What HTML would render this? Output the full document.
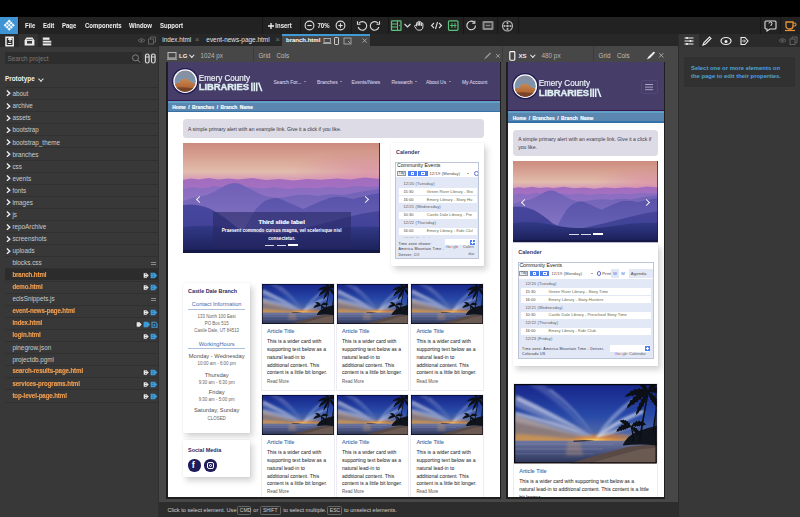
<!DOCTYPE html>
<html><head><meta charset="utf-8">
<style>
*{box-sizing:border-box;margin:0;padding:0}
html,body{width:800px;height:517px;overflow:hidden;background:#000;font-family:"Liberation Sans",sans-serif}
.a{position:absolute}
.t{position:absolute;white-space:nowrap;line-height:1}
#menubar{left:0;top:17px;width:800px;height:17px;background:#222}
.mi{font-size:6px;font-weight:bold;color:#f2f2f2;top:22.2px;transform:scaleY(1.15);transform-origin:0 0}
.sep{position:absolute;top:17px;width:1px;height:17px;background:#171717}
#lside{left:0;top:34px;width:159px;height:483px;background:#383838}
#ltabs{left:0;top:34px;width:159px;height:12.5px;background:#2a2a2a}
#doctabs{left:159px;top:34px;width:520px;height:12px;background:#272727}
#canvas{left:159px;top:46px;width:520px;height:456px;background:#474747}
#status{left:159px;top:501.6px;width:520px;height:15.4px;background:#2d2d2d}
#rside{left:679px;top:34px;width:121px;height:483px;background:#383838}
.rl{position:absolute;left:5px;width:153px;height:1px;background:#303030}
.rt{left:12.4px;font-size:6.35px;color:#cacaca}
.rt.o{color:#ec9c50;font-weight:bold;font-size:6.15px;letter-spacing:-.1px;transform:scaleY(1.12);transform-origin:0 60%;-webkit-text-stroke:.15px #ec9c50}
.chev{position:absolute;left:5px;width:4.2px;height:4.2px;border-right:1.3px solid #f0f0f0;border-top:1.3px solid #f0f0f0;transform:rotate(45deg)}
.ico{position:absolute}

.logo{position:absolute;width:26.4px;height:26.4px;border-radius:50%;background:#1d1a50}
.logo::before{content:"";position:absolute;left:1.4px;top:1.4px;width:23.6px;height:23.6px;border-radius:50%;background:#fff}
.logo::after{content:"";position:absolute;left:2.7px;top:2.7px;width:21px;height:21px;border-radius:50%;background:radial-gradient(ellipse 55% 35% at 45% 62%,#c07840 0,#b86e3a 60%,transparent 62%),linear-gradient(#8a8e9a 0,#7a90a8 35%,#8898a8 50%,#a06a48 72%,#8a4a2a 100%)}
.nav{top:18.6px;font-size:4.9px;color:#ccc8e0;-webkit-text-stroke:.1px #ccc8e0}
.lgnav{top:17.4px}
.car{display:inline-block;margin-left:2.4px;vertical-align:middle;border-left:1.5px solid transparent;border-right:1.5px solid transparent;border-top:1.8px solid #d4d0e6;position:relative;top:-.6px}
.chv{width:5px;height:5px;border-right:.8px solid #eee;border-top:.8px solid #eee}
.card{background:#fff;box-shadow:2.5px 3.5px 6px rgba(0,0,0,.17),0 0 1px rgba(0,0,0,.12)}
.gcal{position:absolute;border:.6px solid #bcc4d8;background:#fff;overflow:hidden}
.gd{font-size:4px;color:#555;letter-spacing:.15px}
.gdt{font-size:4px;color:#444;letter-spacing:.2px}
.gbtn{position:absolute;top:8.2px;height:5px}
.gft{font-size:3.6px;color:#333;line-height:5.2px;white-space:normal;letter-spacing:.25px}
.gr{position:absolute;height:6.9px;background:#fff}
.gt{font-size:4px;color:#444}
.ge{font-size:4.15px;color:#6a6a48}
.sc{left:15.2px;width:67.4px;text-align:center}
.sc.h{font-size:5.7px;color:#3d6bb0}
.sc.s{font-size:4.45px;color:#666}
.sc.d{font-size:5.75px;color:#505050}
.soc{width:12.4px;height:12.4px;border-radius:50%;background:#201c5a}
.acard{background:#fff;border:.5px solid #ececf2}
.at{font-size:5.6px;color:#4470ae;-webkit-text-stroke:.1px #4470ae}
.ab{font-size:5.1px;color:#333;line-height:7.75px;-webkit-text-stroke:.04px #333}
.rm{font-size:4.45px;color:#555}
.kb{top:506px;height:8.6px;border:.8px solid #666;border-radius:1.5px}
</style></head><body>
<div class="a" id="menubar"></div>
<div class="a" style="left:0;top:17px;width:17.6px;height:17px;background:#3f95d3"></div>
<svg class="ico" style="left:2.6px;top:19.4px" width="12.4" height="12.4" viewBox="0 0 12 12"><path d="M6 .6L11.4 6 6 11.4.6 6z" fill="#f4f8fb"/><path d="M4.2 2.4L9.6 7.8M2.4 4.2L7.8 9.6M7.8 2.4L2.4 7.8M9.6 4.2L4.2 9.6" stroke="#3f95d3" stroke-width=".75"/></svg>
<div class="a" style="left:17.6px;top:17px;width:1.2px;height:17px;background:#1a0e0e"></div>
<div class="t mi" style="left:25px">File</div>
<div class="t mi" style="left:43px">Edit</div>
<div class="t mi" style="left:62px">Page</div>
<div class="t mi" style="left:85px">Components</div>
<div class="t mi" style="left:129px">Window</div>
<div class="t mi" style="left:160px">Support</div>

<div class="sep" style="left:262px"></div>
<svg class="ico" style="left:268.3px;top:22.6px" width="6" height="6" viewBox="0 0 6 6"><path d="M3 0v6M0 3h6" stroke="#f2f2f2" stroke-width="1.3"/></svg><div class="t mi" style="left:275.3px">Insert</div>
<div class="sep" style="left:300px"></div>
<svg class="ico" style="left:304px;top:20px" width="44" height="11" viewBox="0 0 44 11"><circle cx="5.5" cy="5.5" r="4.4" fill="none" stroke="#ddd" stroke-width="1.1"/><path d="M3.3 5.5h4.4" stroke="#ddd" stroke-width="1.1"/><circle cx="36.5" cy="5.5" r="4.4" fill="none" stroke="#ddd" stroke-width="1.1"/><path d="M34.3 5.5h4.4M36.5 3.3v4.4" stroke="#ddd" stroke-width="1.1"/></svg>
<div class="t mi" style="left:317.5px">70%</div>
<div class="sep" style="left:351px"></div>
<svg class="ico" style="left:356px;top:20px" width="26" height="11" viewBox="0 0 26 11"><path d="M3 3.2A4.3 4.3 0 1 1 2.2 7" fill="none" stroke="#ddd" stroke-width="1.1"/><path d="M1.5 1.2v3h3" fill="none" stroke="#ddd" stroke-width="1.1"/><path d="M22 3.2A4.3 4.3 0 1 0 22.8 7" fill="none" stroke="#ddd" stroke-width="1.1"/><path d="M23.5 1.2v3h-3" fill="none" stroke="#ddd" stroke-width="1.1"/></svg>
<div class="sep" style="left:388px"></div>
<svg class="ico" style="left:390px;top:20px" width="72" height="11" viewBox="0 0 72 11"><rect x="1.5" y=".8" width="9.5" height="9.5" rx=".6" fill="none" stroke="#5cc27c" stroke-width="1.3"/><path d="M1.5 4h5.5M1.5 7h5.5M7.5 .8v9.5" stroke="#5cc27c" stroke-width="1"/><path d="M9 5.5h1" stroke="#5cc27c" stroke-width="1"/><path d="M14.5 4l3 3 3-3" fill="none" stroke="#ddd" stroke-width="1.1"/><path d="M26.5 6V3.2a.8.8 0 0 1 1.6 0V5.5M28.1 5.5V2a.8.8 0 0 1 1.6 0v3.5M29.7 5.5V2.6a.8.8 0 0 1 1.6 0V5.8M31.3 5.8V3.8a.8.8 0 0 1 1.6 0V7c0 2-1.4 3.2-3.2 3.2h-1c-1.2 0-2-.6-2.6-1.6L24.6 6.4a.8.8 0 0 1 1.3-.9L26.5 6.4" fill="none" stroke="#ddd" stroke-width="1"/><path d="M44 3l-2.5 2.5L44 8M49 3l2.5 2.5L49 8M47.5 2l-2 7" fill="none" stroke="#ddd" stroke-width="1.1"/><rect x="58.5" y=".8" width="9.5" height="9.5" rx="1" fill="none" stroke="#5cc27c" stroke-width="1.2"/><path d="M62 3v5M65 3v5M60 5.5h6.5" stroke="#5cc27c" stroke-width=".9"/></svg>
<div class="sep" style="left:463px"></div>
<svg class="ico" style="left:466px;top:20px" width="30" height="11" viewBox="0 0 30 11"><path d="M9.5 5.5A4.3 4.3 0 1 1 8.2 2.4" fill="none" stroke="#ddd" stroke-width="1.1"/><path d="M8.8 .8v2.5H6.3" fill="none" stroke="#ddd" stroke-width="1.1"/><rect x="16.5" y="1" width="11" height="9" rx="1" fill="#8a8a8a"/><rect x="18.5" y="3" width="7" height="5" fill="#3a3a3a"/><path d="M20 5.5h4" stroke="#8a8a8a" stroke-width="1"/></svg>
<div class="sep" style="left:497px"></div>
<svg class="ico" style="left:501px;top:19.5px" width="13" height="12" viewBox="0 0 13 12"><circle cx="6.5" cy="6" r="5" fill="none" stroke="#bbb" stroke-width="1.1"/><circle cx="6.5" cy="6" r="1.3" fill="#bbb"/><circle cx="6.5" cy="3" r="1.1" fill="#bbb"/><circle cx="6.5" cy="9" r="1.1" fill="#bbb"/><circle cx="3.5" cy="6" r="1.1" fill="#bbb"/><circle cx="9.5" cy="6" r="1.1" fill="#bbb"/></svg>
<div class="sep" style="left:518px"></div>
<div class="sep" style="left:760px"></div>
<svg class="ico" style="left:764px;top:20px" width="13" height="12" viewBox="0 0 13 12"><path d="M2 1h9a1 1 0 0 1 1 1v6a1 1 0 0 1-1 1H6l-3 2V9H2a1 1 0 0 1-1-1V2a1 1 0 0 1 1-1z" fill="none" stroke="#ddd" stroke-width="1.1"/><path d="M5 3.5a1.5 1.5 0 1 1 2 1.4V6" fill="none" stroke="#ddd" stroke-width="1"/></svg>
<div class="sep" style="left:780px"></div>
<svg class="ico" style="left:784px;top:20px" width="13" height="12" viewBox="0 0 13 12"><path d="M2 2h7v4a3 3 0 0 1-3 3H5a3 3 0 0 1-3-3z" fill="none" stroke="#e69338" stroke-width="1.3"/><path d="M9 3h1.5a1.5 1.5 0 0 1 0 3H9" fill="none" stroke="#e69338" stroke-width="1.1"/><path d="M1 10.5h10" stroke="#e69338" stroke-width="1.2"/></svg>

<div class="a" id="lside"></div>
<div class="a" id="ltabs"></div>
<div class="a" style="left:19px;top:34px;width:18.5px;height:12.5px;background:#333"></div>
<svg class="ico" style="left:4px;top:35.5px" width="52" height="11" viewBox="0 0 52 11"><path d="M2 1.2h7.2v8.6H2z" fill="none" stroke="#ececec" stroke-width="1.5"/><path d="M4 3.5l2-1.6 2 1.6M6 2v4" fill="none" stroke="#ececec" stroke-width="1.1"/><path d="M3.8 7.5h3.6" stroke="#ececec" stroke-width="1"/><path d="M20.6 4.6 L22.4 1.4 H28.6 L30.4 4.6 V9.4 H20.6z" fill="#ececec"/><rect x="23" y="5" width="5" height="2.6" fill="#3a3a3a"/><path d="M22.5 3.6h6" stroke="#3a3a3a" stroke-width=".7"/><path d="M38.6 1.2h7.2v3H38.6z M38.6 4.4h8.8v2.5H38.6z M38.6 7.1h8.8v2.6H38.6z" fill="#ececec" stroke="#2a2a2a" stroke-width=".5"/></svg>
<svg class="ico" style="left:137px;top:36px" width="21" height="9" viewBox="0 0 21 9"><path d="M1 4.5Q4.5 1 8 4.5 4.5 8 1 4.5z" fill="none" stroke="#666" stroke-width=".9"/><circle cx="4.5" cy="4.5" r="1.1" fill="#666"/><rect x="11.5" y="3" width="5" height="5" fill="none" stroke="#666" stroke-width=".9"/><path d="M13.5 3V1h5v5h-2" fill="none" stroke="#666" stroke-width=".9"/></svg>

<div class="a" style="left:5px;top:51.5px;width:137px;height:12px;background:#2d2d2d;border-radius:1px"></div>
<div class="t" style="left:7.5px;top:55.6px;font-size:6.35px;color:#7a7a7a">Search project</div>
<svg class="ico" style="left:131px;top:52.5px" width="27" height="11" viewBox="0 0 27 11"><circle cx="4.5" cy="4.8" r="3" fill="none" stroke="#8a8a8a" stroke-width=".9"/><path d="M6.6 7l2.6 2.6" stroke="#8a8a8a" stroke-width="1"/><rect x="14.5" y="1" width="3.6" height="9" rx="1.8" fill="none" stroke="#d8d8d8" stroke-width="1.2"/><rect x="20.5" y="1" width="3.6" height="9" rx="1.8" fill="none" stroke="#d8d8d8" stroke-width="1.2"/><path d="M14.5 4h3.6M20.5 4h3.6" stroke="#d8d8d8" stroke-width="1"/></svg>
<div class="t" style="left:4.9px;top:76.3px;font-size:6.4px;font-weight:bold;color:#f0f0f0">Prototype</div>
<div class="a" style="left:39px;top:76.6px;width:3.8px;height:3.8px;border-right:1.2px solid #eee;border-bottom:1.2px solid #eee;transform:rotate(45deg)"></div>
<div class="rl" style="top:86.8px"></div>
<svg class="a" style="left:6px;top:90.4px" width="5" height="6.4" viewBox="0 0 5 6.4"><path d="M.9 .6L3.8 3.2.9 5.8" fill="none" stroke="#f2f2f2" stroke-width="1.3"/></svg><div class="t rt" style="top:91.1px">about</div><div class="rl" style="top:99.0px"></div>
<svg class="a" style="left:6px;top:102.5px" width="5" height="6.4" viewBox="0 0 5 6.4"><path d="M.9 .6L3.8 3.2.9 5.8" fill="none" stroke="#f2f2f2" stroke-width="1.3"/></svg><div class="t rt" style="top:103.2px">archive</div><div class="rl" style="top:111.1px"></div>
<svg class="a" style="left:6px;top:114.6px" width="5" height="6.4" viewBox="0 0 5 6.4"><path d="M.9 .6L3.8 3.2.9 5.8" fill="none" stroke="#f2f2f2" stroke-width="1.3"/></svg><div class="t rt" style="top:115.3px">assets</div><div class="rl" style="top:123.2px"></div>
<svg class="a" style="left:6px;top:126.7px" width="5" height="6.4" viewBox="0 0 5 6.4"><path d="M.9 .6L3.8 3.2.9 5.8" fill="none" stroke="#f2f2f2" stroke-width="1.3"/></svg><div class="t rt" style="top:127.4px">bootstrap</div><div class="rl" style="top:135.3px"></div>
<svg class="a" style="left:6px;top:138.8px" width="5" height="6.4" viewBox="0 0 5 6.4"><path d="M.9 .6L3.8 3.2.9 5.8" fill="none" stroke="#f2f2f2" stroke-width="1.3"/></svg><div class="t rt" style="top:139.5px">bootstrap_theme</div><div class="rl" style="top:147.4px"></div>
<svg class="a" style="left:6px;top:150.9px" width="5" height="6.4" viewBox="0 0 5 6.4"><path d="M.9 .6L3.8 3.2.9 5.8" fill="none" stroke="#f2f2f2" stroke-width="1.3"/></svg><div class="t rt" style="top:151.6px">branches</div><div class="rl" style="top:159.5px"></div>
<svg class="a" style="left:6px;top:163.0px" width="5" height="6.4" viewBox="0 0 5 6.4"><path d="M.9 .6L3.8 3.2.9 5.8" fill="none" stroke="#f2f2f2" stroke-width="1.3"/></svg><div class="t rt" style="top:163.7px">css</div><div class="rl" style="top:171.6px"></div>
<svg class="a" style="left:6px;top:175.1px" width="5" height="6.4" viewBox="0 0 5 6.4"><path d="M.9 .6L3.8 3.2.9 5.8" fill="none" stroke="#f2f2f2" stroke-width="1.3"/></svg><div class="t rt" style="top:175.8px">events</div><div class="rl" style="top:183.7px"></div>
<svg class="a" style="left:6px;top:187.2px" width="5" height="6.4" viewBox="0 0 5 6.4"><path d="M.9 .6L3.8 3.2.9 5.8" fill="none" stroke="#f2f2f2" stroke-width="1.3"/></svg><div class="t rt" style="top:187.9px">fonts</div><div class="rl" style="top:195.8px"></div>
<svg class="a" style="left:6px;top:199.3px" width="5" height="6.4" viewBox="0 0 5 6.4"><path d="M.9 .6L3.8 3.2.9 5.8" fill="none" stroke="#f2f2f2" stroke-width="1.3"/></svg><div class="t rt" style="top:200.0px">images</div><div class="rl" style="top:207.9px"></div>
<svg class="a" style="left:6px;top:211.4px" width="5" height="6.4" viewBox="0 0 5 6.4"><path d="M.9 .6L3.8 3.2.9 5.8" fill="none" stroke="#f2f2f2" stroke-width="1.3"/></svg><div class="t rt" style="top:212.1px">js</div><div class="rl" style="top:220.0px"></div>
<svg class="a" style="left:6px;top:223.5px" width="5" height="6.4" viewBox="0 0 5 6.4"><path d="M.9 .6L3.8 3.2.9 5.8" fill="none" stroke="#f2f2f2" stroke-width="1.3"/></svg><div class="t rt" style="top:224.2px">repoArchive</div><div class="rl" style="top:232.1px"></div>
<svg class="a" style="left:6px;top:235.6px" width="5" height="6.4" viewBox="0 0 5 6.4"><path d="M.9 .6L3.8 3.2.9 5.8" fill="none" stroke="#f2f2f2" stroke-width="1.3"/></svg><div class="t rt" style="top:236.3px">screenshots</div><div class="rl" style="top:244.2px"></div>
<svg class="a" style="left:6px;top:247.7px" width="5" height="6.4" viewBox="0 0 5 6.4"><path d="M.9 .6L3.8 3.2.9 5.8" fill="none" stroke="#f2f2f2" stroke-width="1.3"/></svg><div class="t rt" style="top:248.4px">uploads</div><div class="rl" style="top:256.3px"></div>
<div class="t rt" style="top:259.9px">blocks.css</div><div class="rl" style="top:268.4px"></div>
<div class="a" style="left:151px;top:261.9px;width:5px;height:3.2px;border-top:1px solid #8a8a8a;border-bottom:1px solid #8a8a8a"></div>
<div class="a" style="left:5px;top:268.7px;width:153px;height:11.8px;background:#2c2c2c"></div>
<div class="t rt o" style="top:271.6px">branch.html</div><div class="rl" style="top:280.5px"></div>
<svg class="a" style="left:142px;top:272.3px" width="16" height="7" viewBox="0 0 16 7"><path d="M1.2 .8h3.6l2.2 2.7-2.2 2.7H1.2z" fill="#e8e8e8" stroke="#111" stroke-width=".7"/><path d="M3 2.3h1.5M3 4.5h1.5" stroke="#111" stroke-width=".5"/><path d="M8.6 .8h4.2l2.4 2.7-2.4 2.7H8.6z" fill="#3d9ad8"/><path d="M10 2.3h2M10 4.5h2" stroke="#2a5a80" stroke-width=".5"/></svg>
<div class="t rt o" style="top:283.7px">demo.html</div><div class="rl" style="top:292.6px"></div>
<svg class="a" style="left:142px;top:284.4px" width="16" height="7" viewBox="0 0 16 7"><path d="M1.2 .8h3.6l2.2 2.7-2.2 2.7H1.2z" fill="#e8e8e8" stroke="#111" stroke-width=".7"/><path d="M3 2.3h1.5M3 4.5h1.5" stroke="#111" stroke-width=".5"/><path d="M8.6 .8h4.2l2.4 2.7-2.4 2.7H8.6z" fill="#3d9ad8"/><path d="M10 2.3h2M10 4.5h2" stroke="#2a5a80" stroke-width=".5"/></svg>
<div class="t rt" style="top:296.2px">eclsSnippets.js</div><div class="rl" style="top:304.7px"></div>
<div class="a" style="left:151px;top:298.2px;width:5px;height:3.2px;border-top:1px solid #8a8a8a;border-bottom:1px solid #8a8a8a"></div>
<div class="t rt o" style="top:307.9px">event-news-page.html</div><div class="rl" style="top:316.8px"></div>
<svg class="a" style="left:142px;top:308.6px" width="16" height="7" viewBox="0 0 16 7"><path d="M1.2 .8h3.6l2.2 2.7-2.2 2.7H1.2z" fill="#e8e8e8" stroke="#111" stroke-width=".7"/><path d="M3 2.3h1.5M3 4.5h1.5" stroke="#111" stroke-width=".5"/><path d="M8.6 .8h4.2l2.4 2.7-2.4 2.7H8.6z" fill="#3d9ad8"/><path d="M10 2.3h2M10 4.5h2" stroke="#2a5a80" stroke-width=".5"/></svg>
<div class="t rt o" style="top:320.0px">index.html</div><div class="rl" style="top:328.9px"></div>
<svg class="a" style="left:135px;top:320.7px" width="23" height="7" viewBox="0 0 23 7"><path d="M1.2 .8h3.6l2.2 2.7-2.2 2.7H1.2z" fill="#e8e8e8" stroke="#111" stroke-width=".7"/><path d="M8.6 .8h4.2l2.4 2.7-2.4 2.7H8.6z" fill="#3d9ad8"/><path d="M17 1.2h3.5l1.5 1.5v3.5h-5z" fill="none" stroke="#3d9ad8" stroke-width="1.1"/><circle cx="19.3" cy="4" r="1" fill="#3d9ad8"/></svg>
<div class="t rt o" style="top:332.1px">login.html</div><div class="rl" style="top:341.0px"></div>
<svg class="a" style="left:142px;top:332.8px" width="16" height="7" viewBox="0 0 16 7"><path d="M1.2 .8h3.6l2.2 2.7-2.2 2.7H1.2z" fill="#e8e8e8" stroke="#111" stroke-width=".7"/><path d="M3 2.3h1.5M3 4.5h1.5" stroke="#111" stroke-width=".5"/><path d="M8.6 .8h4.2l2.4 2.7-2.4 2.7H8.6z" fill="#3d9ad8"/><path d="M10 2.3h2M10 4.5h2" stroke="#2a5a80" stroke-width=".5"/></svg>
<div class="t rt" style="top:344.6px">pinegrow.json</div><div class="rl" style="top:353.1px"></div>
<div class="t rt" style="top:356.7px">projectdb.pgml</div><div class="rl" style="top:365.2px"></div>
<div class="t rt o" style="top:368.4px">search-results-page.html</div><div class="rl" style="top:377.3px"></div>
<svg class="a" style="left:142px;top:369.1px" width="16" height="7" viewBox="0 0 16 7"><path d="M1.2 .8h3.6l2.2 2.7-2.2 2.7H1.2z" fill="#e8e8e8" stroke="#111" stroke-width=".7"/><path d="M3 2.3h1.5M3 4.5h1.5" stroke="#111" stroke-width=".5"/><path d="M8.6 .8h4.2l2.4 2.7-2.4 2.7H8.6z" fill="#3d9ad8"/><path d="M10 2.3h2M10 4.5h2" stroke="#2a5a80" stroke-width=".5"/></svg>
<div class="t rt o" style="top:380.5px">services-programs.html</div><div class="rl" style="top:389.4px"></div>
<svg class="a" style="left:142px;top:381.2px" width="16" height="7" viewBox="0 0 16 7"><path d="M1.2 .8h3.6l2.2 2.7-2.2 2.7H1.2z" fill="#e8e8e8" stroke="#111" stroke-width=".7"/><path d="M3 2.3h1.5M3 4.5h1.5" stroke="#111" stroke-width=".5"/><path d="M8.6 .8h4.2l2.4 2.7-2.4 2.7H8.6z" fill="#3d9ad8"/><path d="M10 2.3h2M10 4.5h2" stroke="#2a5a80" stroke-width=".5"/></svg>
<div class="t rt o" style="top:392.6px">top-level-page.html</div><div class="rl" style="top:401.5px"></div>
<svg class="a" style="left:142px;top:393.3px" width="16" height="7" viewBox="0 0 16 7"><path d="M1.2 .8h3.6l2.2 2.7-2.2 2.7H1.2z" fill="#e8e8e8" stroke="#111" stroke-width=".7"/><path d="M3 2.3h1.5M3 4.5h1.5" stroke="#111" stroke-width=".5"/><path d="M8.6 .8h4.2l2.4 2.7-2.4 2.7H8.6z" fill="#3d9ad8"/><path d="M10 2.3h2M10 4.5h2" stroke="#2a5a80" stroke-width=".5"/></svg>
<div class="a" style="left:158px;top:46px;width:1px;height:471px;background:#2f2f2f"></div><div class="a" style="left:161.2px;top:272.5px;width:.8px;height:16px;background:repeating-linear-gradient(#666 0 .8px,transparent .8px 2.4px)"></div>

<div class="a" id="doctabs"></div>
<div class="t" style="left:162.3px;top:37.2px;font-size:6.35px;color:#e2e2e2">index.html</div>
<div class="t" style="left:195px;top:36.3px;font-size:7.5px;color:#777">&#215;</div>

<div class="t" style="left:206.3px;top:37.2px;font-size:6.45px;color:#e2e2e2">event-news-page.html</div>
<div class="t" style="left:275.5px;top:36.3px;font-size:7.5px;color:#777">&#215;</div>
<div class="a" style="left:281.7px;top:34px;width:88px;height:12px;background:#474747"></div>
<div class="a" style="left:281.7px;top:34px;width:88px;height:2px;background:#3f9ad6"></div>
<div class="t" style="left:286px;top:36.8px;font-size:6px;font-weight:bold;color:#fff">branch.html</div>
<svg class="ico" style="left:323px;top:37px" width="46" height="8" viewBox="0 0 46 8"><rect x="1" y="1.5" width="6.5" height="4" fill="none" stroke="#bbb" stroke-width=".8"/><path d="M0 6.5h8.5" stroke="#bbb" stroke-width=".8"/><rect x="11.5" y=".5" width="4" height="7" rx=".7" fill="none" stroke="#ddd" stroke-width=".9"/><rect x="21" y="1" width="7" height="6" fill="none" stroke="#aaa" stroke-width=".9"/><path d="M25 4l2.5 2.5" stroke="#aaa" stroke-width=".9"/><path d="M39.5 1.5l4.2 4.2M43.7 1.5l-4.2 4.2" stroke="#bbb" stroke-width=".8"/></svg>

<div class="a" id="canvas"></div>
<svg width="0" height="0" style="position:absolute">
<defs>
<linearGradient id="lsky" x1="0" y1="0" x2="0" y2="1"><stop offset="0" stop-color="#8e8c96"/><stop offset=".45" stop-color="#7c94ae"/><stop offset="1" stop-color="#9aa8b8"/></linearGradient>
<linearGradient id="lrock" x1="0" y1="0" x2="0" y2="1"><stop offset="0" stop-color="#c88850"/><stop offset=".5" stop-color="#b46a38"/><stop offset="1" stop-color="#6a3a22"/></linearGradient>
<clipPath id="lclip"><circle cx="13.2" cy="13.2" r="10.6"/></clipPath>
<symbol id="logo" viewBox="0 0 26.4 26.4">
<circle cx="13.2" cy="13.2" r="13.2" fill="#1c1850"/>
<circle cx="13.2" cy="13.2" r="11.9" fill="#fff"/>
<g clip-path="url(#lclip)">
<rect width="26.4" height="26.4" fill="url(#lsky)"/>
<path d="M2 17 L5 15 8 14.5 9 11.5 12 10.8 16 11 17.5 13 20 14.5 24 16 25 26.4 H2z" fill="url(#lrock)"/>
<path d="M2 20 Q10 18 25 21 V26.4 H2z" fill="#7a4428"/>
</g>
</symbol>
<linearGradient id="msky" x1="0" y1="0" x2="0" y2="1"><stop offset="0" stop-color="#cc8c7e"/><stop offset=".14" stop-color="#d8a494"/><stop offset=".26" stop-color="#e2bcac"/><stop offset=".33" stop-color="#d89cb6"/><stop offset=".5" stop-color="#a880c8"/></linearGradient>
<radialGradient id="mglow" cx=".95" cy=".55" r=".4"><stop offset="0" stop-color="#d060a0" stop-opacity=".35"/><stop offset="1" stop-color="#d060a0" stop-opacity="0"/></radialGradient>
<linearGradient id="ml1" x1="0" y1="0" x2="0" y2="1"><stop offset="0" stop-color="#a26cbe"/><stop offset="1" stop-color="#b08ad0"/></linearGradient>
<linearGradient id="ml2" x1="0" y1="0" x2="0" y2="1"><stop offset="0" stop-color="#8a6cc0"/><stop offset="1" stop-color="#9c88d0"/></linearGradient>
<linearGradient id="ml3" x1="0" y1="0" x2="0" y2="1"><stop offset="0" stop-color="#7060b6"/><stop offset="1" stop-color="#8a7cc8"/></linearGradient>
<linearGradient id="ml4" x1="0" y1="0" x2="0" y2="1"><stop offset="0" stop-color="#5a52aa"/><stop offset="1" stop-color="#6a68b8"/></linearGradient>
<linearGradient id="ml5" x1="0" y1="0" x2="0" y2="1"><stop offset="0" stop-color="#48469e"/><stop offset="1" stop-color="#3a4090"/></linearGradient>
<linearGradient id="mbot" x1="0" y1="0" x2="0" y2="1"><stop offset="0" stop-color="#323a88"/><stop offset="1" stop-color="#1a1f56"/></linearGradient>
<symbol id="mtn" viewBox="0 0 200 110" preserveAspectRatio="none">
<rect width="200" height="110" fill="url(#msky)"/>
<rect width="200" height="50" fill="url(#mglow)"/>
<path d="M0 37 L8 35.5 16 36.5 26 35 36 36.5 46 35.5 56 36.5 70 35 84 37 98 36 112 37.5 126 36 140 36.8 156 35.5 170 36.5 184 34.5 200 36 V110 H0z" fill="url(#ml1)"/>
<path d="M0 46 L10 44 20 45.5 32 43 44 45 56 43.5 68 44 80 45.5 92 44 106 46 120 44.5 134 45.5 148 44 162 45 176 43 190 44 200 43 V110 H0z" fill="url(#ml2)"/>
<path d="M0 58 Q12 54 24 52 Q34 48 42 43 Q50 38 58 41 Q68 46 80 52 Q92 56 104 54 Q120 50 136 53 Q150 50 162 52 Q180 48 200 46 V110 H0z" fill="url(#ml3)"/>
<path d="M50 110 Q62 84 74 66 Q84 54 96 55 Q108 60 122 66 Q134 60 148 55 Q160 52 172 56 Q186 52 200 50 V110z" fill="url(#ml4)"/>
<path d="M0 62 Q14 60 28 66 Q40 72 54 84 Q70 94 100 90 Q130 84 160 76 Q180 70 200 68 V110 H0z" fill="url(#ml5)"/>
<path d="M0 84 Q30 80 60 88 Q100 94 140 88 Q170 82 200 84 V110 H0z" fill="url(#mbot)"/>
<rect y="107" width="200" height="3" fill="#141844"/>
<rect x="198.8" width="1.2" height="110" fill="#1e1a3c"/>
</symbol>
<linearGradient id="bsky" x1="0" y1="0" x2="0" y2="1"><stop offset="0" stop-color="#16248a"/><stop offset=".4" stop-color="#284aa8"/><stop offset=".62" stop-color="#5068a8"/><stop offset=".7" stop-color="#c08a50"/><stop offset=".72" stop-color="#e0a040"/></linearGradient>
<linearGradient id="bwarm" x1="0" y1="0" x2="1" y2="0"><stop offset="0" stop-color="#b08060" stop-opacity=".85"/><stop offset=".45" stop-color="#a07868" stop-opacity=".3"/><stop offset="1" stop-color="#a07868" stop-opacity="0"/></linearGradient>
<linearGradient id="bwater" x1="0" y1="0" x2="0" y2="1"><stop offset="0" stop-color="#7078a0"/><stop offset=".5" stop-color="#4a5480"/><stop offset="1" stop-color="#2c3454"/></linearGradient>
<radialGradient id="bsun" cx=".56" cy=".72" r=".22"><stop offset="0" stop-color="#ffd868" stop-opacity="1"/><stop offset=".5" stop-color="#f0a040" stop-opacity=".6"/><stop offset="1" stop-color="#e08040" stop-opacity="0"/></radialGradient>
<filter id="bblur" x="-20%" y="-20%" width="140%" height="140%"><feGaussianBlur stdDeviation="1.6"/></filter><filter id="bblur2" x="-20%" y="-20%" width="140%" height="140%"><feGaussianBlur stdDeviation="1.1"/></filter>
<symbol id="beach" viewBox="0 0 144 80" preserveAspectRatio="none">
<rect width="144" height="80" fill="url(#bsky)"/>
<g filter="url(#bblur)">
<path d="M0 30 Q30 42 80 56 L0 58z" fill="#9a8070" opacity=".8"/>
<path d="M0 50 Q30 52 60 56 L60 58 H0z" fill="#d09850" opacity=".75"/>
<path d="M62 54 Q90 48 118 52 Q92 57 66 57z" fill="#c07848" opacity=".8"/>
<path d="M80 55 Q40 30 0 10 L0 22 Q40 40 80 55z" fill="#b8bcd4" opacity=".45"/>
<path d="M80 55 Q40 38 0 28 L0 38 Q40 46 80 55z" fill="#c8c0c4" opacity=".45"/>
<path d="M80 55 Q50 20 14 0 L30 0 Q58 24 80 55z" fill="#a8b4dc" opacity=".25"/>
</g>
<g filter="url(#bblur2)">
<path d="M82 54 Q44 30 4 12 L2 16 Q44 36 82 54z" fill="#eef0f8" opacity=".45"/>
<path d="M82 54 Q44 38 2 28 L2 31 Q44 42 82 54z" fill="#f0f2fa" opacity=".4"/>
<path d="M82 54 Q60 24 34 6 L38 5 Q64 24 82 54z" fill="#e0e6f6" opacity=".3"/>
<path d="M82 54 Q100 36 130 26 L132 29 Q104 40 84 55z" fill="#e6ecf8" opacity=".6"/>
<path d="M82 54 Q104 44 128 38 L128 41 Q104 48 84 55z" fill="#f0f4fc" opacity=".55"/>
<path d="M82 54 Q96 30 120 14 L122 17 Q100 34 84 55z" fill="#d8e0f4" opacity=".4"/>
</g>
<rect y="42" width="144" height="20" fill="url(#bsun)"/>
<rect y="57" width="144" height="23" fill="url(#bwater)"/>
<path d="M0 60 H100 V61 H0z M0 65 H90 V65.8 H0z M0 70 H80 V70.6 H0z" fill="#9aa0c0" opacity=".35"/>
<path d="M54 57 H66 L70 72 H52z" fill="#d0a070" opacity=".3" filter="url(#bblur)"/>
<path d="M60 57 Q70 56 82 57 L60 58z" fill="#1a1a2a"/>
<path d="M56 80 Q90 70 116 63 L144 60 V80z" fill="#5a4a46"/>
<path d="M76 80 Q104 72 126 66 L144 64 V80z" fill="#6e5e54" opacity=".8"/>
<path d="M110 61 Q114 52 124 48 Q134 44 144 42 V62 Q128 60 110 62z" fill="#10141c"/>
<path d="M125.5 58 Q129.5 34 134.5 8 L136 8.3 Q131 34 127.5 58z M119 58 Q120 50 117.3 43 L118.8 43 Q121.5 50 121 58z M139.5 50 Q140.5 36 143.5 24 L144 26 Q142 36 141.5 50z" fill="#0c1016"/><path d="M135.0 8.0 133.6 6.3 131.9 6.1 130.1 4.6 128.2 5.4 126.1 4.1 124.2 5.7 121.9 4.9 120.2 6.9 117.8 6.9 116.2 9.0 114.0 10.0 112.4 12.2 110.3 13.6 108.0 15.0 108.0 15.0 110.3 13.6 112.6 12.6 115.3 12.7 117.3 11.6 119.8 12.2 121.4 10.7 123.6 11.6 125.1 10.0 126.9 10.9 128.4 9.3 130.0 10.1 131.6 8.7 133.2 9.0 135.0 8.0z M135.0 8.0 132.6 7.5 130.7 8.4 128.2 8.2 126.7 10.0 124.0 10.0 122.9 12.4 120.3 12.8 119.4 15.5 117.1 16.5 116.4 19.3 114.7 21.0 114.0 23.8 112.6 25.9 111.0 28.0 111.0 28.0 112.6 25.9 114.4 24.1 116.9 23.0 118.5 21.2 121.1 20.6 122.1 18.5 124.7 18.2 125.6 15.9 127.9 15.7 128.8 13.3 130.9 13.0 131.9 10.8 133.7 10.0 135.0 8.0z M135.0 8.0 133.1 9.2 132.3 11.0 130.3 12.3 130.0 14.4 128.0 15.7 127.9 18.0 126.0 19.5 126.0 21.9 124.4 23.6 124.4 26.1 123.2 28.1 123.1 30.7 122.1 32.9 121.0 35.0 121.0 35.0 122.1 32.9 123.4 30.9 125.4 29.3 126.4 27.2 128.5 25.7 129.0 23.5 131.0 22.0 131.1 19.7 133.0 18.2 132.8 15.8 134.3 14.3 134.2 12.0 135.1 10.2 135.0 8.0z M135.0 8.0 136.9 8.6 138.0 8.1 139.5 9.0 140.4 8.1 141.6 9.4 142.5 8.1 143.3 9.4 144.5 8.2 145.3 9.2 146.8 8.3 147.8 8.9 149.6 8.5 150.9 9.1 152.0 10.0 152.0 10.0 150.9 9.1 149.8 8.0 149.2 6.2 147.9 5.7 147.0 3.8 145.4 4.2 144.2 2.6 142.6 3.7 141.0 2.5 139.7 4.2 138.1 3.8 137.1 5.6 135.7 6.1 135.0 8.0z M135.0 8.0 135.1 9.9 136.0 10.9 136.0 12.8 137.4 13.6 137.2 15.5 138.9 16.2 138.8 18.1 140.8 18.9 140.9 20.7 142.8 21.6 143.5 23.3 145.3 24.5 146.3 26.2 147.0 28.0 147.0 28.0 146.3 26.2 145.7 24.3 146.0 22.1 145.1 20.5 145.4 18.3 143.9 17.1 144.2 14.9 142.3 14.0 142.3 12.0 140.3 11.4 139.9 9.7 137.9 9.3 136.9 8.2 135.0 8.0z M135.0 8.0 135.2 6.5 134.6 5.5 134.7 4.0 133.6 3.4 133.6 1.8 132.2 1.6 131.9 0.1 130.4 0.2 129.8 -1.0 128.3 -0.8 127.4 -1.5 126.0 -1.2 125.0 -1.6 124.0 -2.0 124.0 -2.0 125.0 -1.6 125.9 -0.9 126.3 0.4 127.2 0.9 127.4 2.3 128.5 2.4 128.6 3.9 129.9 3.9 129.9 5.2 131.4 5.2 131.6 6.4 133.0 6.6 133.6 7.5 135.0 8.0z M135.0 8.0 136.6 7.1 137.3 5.9 138.9 5.4 139.2 4.1 140.7 4.0 140.9 2.7 142.2 2.8 142.4 1.4 143.5 1.6 144.0 0.3 144.9 0.2 145.8 -0.9 146.9 -1.1 148.0 -1.0 148.0 -1.0 146.9 -1.1 145.8 -1.2 144.5 -2.0 143.4 -1.7 141.9 -2.2 141.0 -1.1 139.3 -1.3 138.8 0.2 137.2 0.5 137.0 2.2 135.7 3.0 135.7 4.8 134.9 6.1 135.0 8.0z M118.0 43.0 117.0 41.6 115.8 41.4 114.4 40.2 113.1 41.0 111.5 39.9 110.3 41.4 108.6 40.8 107.7 42.7 106.0 42.8 105.3 44.7 104.0 45.6 103.4 47.5 102.3 48.8 101.0 50.0 101.0 50.0 102.3 48.8 103.7 47.8 105.6 47.7 106.8 46.8 108.6 47.2 109.3 45.9 110.9 46.7 111.6 45.2 112.9 46.0 113.6 44.5 114.6 45.1 115.6 43.9 116.7 44.0 118.0 43.0z M118.0 43.0 117.8 41.4 116.9 40.7 116.6 39.1 115.3 38.9 114.9 37.4 113.4 37.5 112.8 36.2 111.3 36.7 110.5 35.8 109.2 36.5 108.2 36.2 107.0 36.9 106.0 37.0 105.0 37.0 105.0 37.0 106.0 37.0 107.0 37.3 107.7 38.4 108.7 38.5 109.2 39.7 110.3 39.5 110.7 40.8 111.9 40.4 112.3 41.6 113.7 41.2 114.2 42.3 115.6 42.2 116.5 42.9 118.0 43.0z M118.0 43.0 119.8 43.2 120.9 42.6 122.5 43.2 123.2 42.2 124.6 43.1 125.3 41.9 126.4 42.9 127.4 41.6 128.4 42.4 129.7 41.3 130.8 41.7 132.4 41.0 133.7 41.3 135.0 42.0 135.0 42.0 133.7 41.3 132.5 40.6 131.6 39.0 130.2 38.8 129.0 37.3 127.5 37.9 126.1 36.6 124.7 37.9 123.1 37.1 122.1 38.8 120.5 38.7 119.7 40.4 118.5 41.2 118.0 43.0z M118.0 43.0 118.3 44.4 119.1 45.0 119.3 46.4 120.4 46.6 120.5 48.1 121.9 48.1 122.0 49.5 123.5 49.6 123.8 50.8 125.3 50.9 126.0 51.8 127.4 52.2 128.3 53.0 129.0 54.0 129.0 54.0 128.3 53.0 127.7 51.9 127.7 50.4 126.8 49.6 126.8 48.0 125.6 47.5 125.5 46.0 124.1 45.8 123.8 44.4 122.3 44.4 121.8 43.3 120.3 43.4 119.4 42.8 118.0 43.0z" fill="#0c1016"/>
<rect x=".6" y=".6" width="142.8" height="78.8" fill="none" stroke="#06060e" stroke-width="1.3"/>
</symbol>
<filter id="bblurs" x="-20%" y="-20%" width="140%" height="140%"><feGaussianBlur stdDeviation="2.6"/></filter><filter id="bblur2s" x="-20%" y="-20%" width="140%" height="140%"><feGaussianBlur stdDeviation="1.8"/></filter>
<symbol id="beachS" viewBox="0 0 144 80" preserveAspectRatio="none">
<rect width="144" height="80" fill="url(#bsky)"/>
<g filter="url(#bblurs)">
<path d="M0 30 Q30 42 80 56 L0 58z" fill="#9a8070" opacity=".8"/>
<path d="M0 50 Q30 52 60 56 L60 58 H0z" fill="#d09850" opacity=".75"/>
<path d="M62 54 Q90 48 118 52 Q92 57 66 57z" fill="#c07848" opacity=".8"/>
<path d="M80 55 Q40 30 0 10 L0 22 Q40 40 80 55z" fill="#b8bcd4" opacity=".45"/>
<path d="M80 55 Q40 38 0 28 L0 38 Q40 46 80 55z" fill="#c8c0c4" opacity=".45"/>
<path d="M80 55 Q50 20 14 0 L30 0 Q58 24 80 55z" fill="#a8b4dc" opacity=".25"/>
</g>
<g filter="url(#bblur2s)">
<path d="M82 54 Q44 30 4 12 L2 16 Q44 36 82 54z" fill="#eef0f8" opacity=".45"/>
<path d="M82 54 Q44 38 2 28 L2 31 Q44 42 82 54z" fill="#f0f2fa" opacity=".4"/>
<path d="M82 54 Q60 24 34 6 L38 5 Q64 24 82 54z" fill="#e0e6f6" opacity=".3"/>
<path d="M82 54 Q100 36 130 26 L132 29 Q104 40 84 55z" fill="#e6ecf8" opacity=".6"/>
<path d="M82 54 Q104 44 128 38 L128 41 Q104 48 84 55z" fill="#f0f4fc" opacity=".55"/>
<path d="M82 54 Q96 30 120 14 L122 17 Q100 34 84 55z" fill="#d8e0f4" opacity=".4"/>
</g>
<rect y="42" width="144" height="20" fill="url(#bsun)"/>
<rect y="57" width="144" height="23" fill="url(#bwater)"/>
<path d="M0 60 H100 V61 H0z M0 65 H90 V65.8 H0z M0 70 H80 V70.6 H0z" fill="#9aa0c0" opacity=".35"/>
<path d="M54 57 H66 L70 72 H52z" fill="#d0a070" opacity=".3" filter="url(#bblurs)"/>
<path d="M60 57 Q70 56 82 57 L60 58z" fill="#1a1a2a"/>
<path d="M56 80 Q90 70 116 63 L144 60 V80z" fill="#5a4a46"/>
<path d="M76 80 Q104 72 126 66 L144 64 V80z" fill="#6e5e54" opacity=".8"/>
<path d="M110 61 Q114 52 124 48 Q134 44 144 42 V62 Q128 60 110 62z" fill="#10141c"/>
<path d="M125.5 58 Q129.5 34 134.5 8 L136 8.3 Q131 34 127.5 58z M119 58 Q120 50 117.3 43 L118.8 43 Q121.5 50 121 58z M139.5 50 Q140.5 36 143.5 24 L144 26 Q142 36 141.5 50z" fill="#0c1016"/><path d="M135.0 8.0 133.6 6.3 131.9 6.1 130.1 4.6 128.2 5.4 126.1 4.1 124.2 5.7 121.9 4.9 120.2 6.9 117.8 6.9 116.2 9.0 114.0 10.0 112.4 12.2 110.3 13.6 108.0 15.0 108.0 15.0 110.3 13.6 112.6 12.6 115.3 12.7 117.3 11.6 119.8 12.2 121.4 10.7 123.6 11.6 125.1 10.0 126.9 10.9 128.4 9.3 130.0 10.1 131.6 8.7 133.2 9.0 135.0 8.0z M135.0 8.0 132.6 7.5 130.7 8.4 128.2 8.2 126.7 10.0 124.0 10.0 122.9 12.4 120.3 12.8 119.4 15.5 117.1 16.5 116.4 19.3 114.7 21.0 114.0 23.8 112.6 25.9 111.0 28.0 111.0 28.0 112.6 25.9 114.4 24.1 116.9 23.0 118.5 21.2 121.1 20.6 122.1 18.5 124.7 18.2 125.6 15.9 127.9 15.7 128.8 13.3 130.9 13.0 131.9 10.8 133.7 10.0 135.0 8.0z M135.0 8.0 133.1 9.2 132.3 11.0 130.3 12.3 130.0 14.4 128.0 15.7 127.9 18.0 126.0 19.5 126.0 21.9 124.4 23.6 124.4 26.1 123.2 28.1 123.1 30.7 122.1 32.9 121.0 35.0 121.0 35.0 122.1 32.9 123.4 30.9 125.4 29.3 126.4 27.2 128.5 25.7 129.0 23.5 131.0 22.0 131.1 19.7 133.0 18.2 132.8 15.8 134.3 14.3 134.2 12.0 135.1 10.2 135.0 8.0z M135.0 8.0 136.9 8.6 138.0 8.1 139.5 9.0 140.4 8.1 141.6 9.4 142.5 8.1 143.3 9.4 144.5 8.2 145.3 9.2 146.8 8.3 147.8 8.9 149.6 8.5 150.9 9.1 152.0 10.0 152.0 10.0 150.9 9.1 149.8 8.0 149.2 6.2 147.9 5.7 147.0 3.8 145.4 4.2 144.2 2.6 142.6 3.7 141.0 2.5 139.7 4.2 138.1 3.8 137.1 5.6 135.7 6.1 135.0 8.0z M135.0 8.0 135.1 9.9 136.0 10.9 136.0 12.8 137.4 13.6 137.2 15.5 138.9 16.2 138.8 18.1 140.8 18.9 140.9 20.7 142.8 21.6 143.5 23.3 145.3 24.5 146.3 26.2 147.0 28.0 147.0 28.0 146.3 26.2 145.7 24.3 146.0 22.1 145.1 20.5 145.4 18.3 143.9 17.1 144.2 14.9 142.3 14.0 142.3 12.0 140.3 11.4 139.9 9.7 137.9 9.3 136.9 8.2 135.0 8.0z M135.0 8.0 135.2 6.5 134.6 5.5 134.7 4.0 133.6 3.4 133.6 1.8 132.2 1.6 131.9 0.1 130.4 0.2 129.8 -1.0 128.3 -0.8 127.4 -1.5 126.0 -1.2 125.0 -1.6 124.0 -2.0 124.0 -2.0 125.0 -1.6 125.9 -0.9 126.3 0.4 127.2 0.9 127.4 2.3 128.5 2.4 128.6 3.9 129.9 3.9 129.9 5.2 131.4 5.2 131.6 6.4 133.0 6.6 133.6 7.5 135.0 8.0z M135.0 8.0 136.6 7.1 137.3 5.9 138.9 5.4 139.2 4.1 140.7 4.0 140.9 2.7 142.2 2.8 142.4 1.4 143.5 1.6 144.0 0.3 144.9 0.2 145.8 -0.9 146.9 -1.1 148.0 -1.0 148.0 -1.0 146.9 -1.1 145.8 -1.2 144.5 -2.0 143.4 -1.7 141.9 -2.2 141.0 -1.1 139.3 -1.3 138.8 0.2 137.2 0.5 137.0 2.2 135.7 3.0 135.7 4.8 134.9 6.1 135.0 8.0z M118.0 43.0 117.0 41.6 115.8 41.4 114.4 40.2 113.1 41.0 111.5 39.9 110.3 41.4 108.6 40.8 107.7 42.7 106.0 42.8 105.3 44.7 104.0 45.6 103.4 47.5 102.3 48.8 101.0 50.0 101.0 50.0 102.3 48.8 103.7 47.8 105.6 47.7 106.8 46.8 108.6 47.2 109.3 45.9 110.9 46.7 111.6 45.2 112.9 46.0 113.6 44.5 114.6 45.1 115.6 43.9 116.7 44.0 118.0 43.0z M118.0 43.0 117.8 41.4 116.9 40.7 116.6 39.1 115.3 38.9 114.9 37.4 113.4 37.5 112.8 36.2 111.3 36.7 110.5 35.8 109.2 36.5 108.2 36.2 107.0 36.9 106.0 37.0 105.0 37.0 105.0 37.0 106.0 37.0 107.0 37.3 107.7 38.4 108.7 38.5 109.2 39.7 110.3 39.5 110.7 40.8 111.9 40.4 112.3 41.6 113.7 41.2 114.2 42.3 115.6 42.2 116.5 42.9 118.0 43.0z M118.0 43.0 119.8 43.2 120.9 42.6 122.5 43.2 123.2 42.2 124.6 43.1 125.3 41.9 126.4 42.9 127.4 41.6 128.4 42.4 129.7 41.3 130.8 41.7 132.4 41.0 133.7 41.3 135.0 42.0 135.0 42.0 133.7 41.3 132.5 40.6 131.6 39.0 130.2 38.8 129.0 37.3 127.5 37.9 126.1 36.6 124.7 37.9 123.1 37.1 122.1 38.8 120.5 38.7 119.7 40.4 118.5 41.2 118.0 43.0z M118.0 43.0 118.3 44.4 119.1 45.0 119.3 46.4 120.4 46.6 120.5 48.1 121.9 48.1 122.0 49.5 123.5 49.6 123.8 50.8 125.3 50.9 126.0 51.8 127.4 52.2 128.3 53.0 129.0 54.0 129.0 54.0 128.3 53.0 127.7 51.9 127.7 50.4 126.8 49.6 126.8 48.0 125.6 47.5 125.5 46.0 124.1 45.8 123.8 44.4 122.3 44.4 121.8 43.3 120.3 43.4 119.4 42.8 118.0 43.0z" fill="#0c1016"/>
<rect x=".6" y=".6" width="142.8" height="78.8" fill="none" stroke="#06060e" stroke-width="1.3"/>
</symbol>
</defs></svg>

<!-- LG FRAME -->
<div class="a" style="left:166.2px;top:62px;width:335.2px;height:436.6px;background:#1e1e1e"></div>
<div class="a" id="lg" style="left:167.8px;top:62px;width:332.2px;height:435px;background:#fff;overflow:hidden">
 <div class="a" style="left:0;top:0;width:100%;height:37.75px;background:#463d68"></div>
 <div class="a" style="left:0;top:37.75px;width:100%;height:1.35px;background:#3e1450"></div>
 <div class="a" style="left:0;top:39.1px;width:100%;height:1.9px;background:#5fa2c6"></div>
 <div class="a" style="left:0;top:41px;width:100%;height:7.8px;background:#5a86b0"></div>
 <div class="a" style="left:0;top:48.8px;width:100%;height:1.5px;background:#3572a8"></div>
 <div class="t" style="left:4.4px;top:44.2px;font-size:4.85px;font-weight:bold;color:#fff;word-spacing:1.2px;-webkit-text-stroke:.15px #fff">Home / Branches / Branch Name</div>
 <!-- logo -->
 <svg class="a" style="left:4.2px;top:6.2px" width="26.4" height="26.4"><use href="#logo"/></svg>
 <div class="t" style="left:31px;top:11.6px;font-size:8.1px;color:#eef6f8;transform:scaleY(1.12);transform-origin:0 0;-webkit-text-stroke:.15px #eef6f8">Emery County</div>
 <div class="t" style="left:31px;top:20.3px;font-size:9.5px;font-weight:bold;color:#dff0f2;transform:scaleY(1.02);transform-origin:0 0;letter-spacing:-.1px;-webkit-text-stroke:.35px #dff0f2">LIBRARIES</div>
 <svg class="a" style="left:82.8px;top:20.2px" width="12" height="9.5" viewBox="0 0 12 9.5"><path d="M.9 .4v8.8M3.3 .4v8.8M5.7 .4v8.8M7.6 .4l3.2 8.8" stroke="#dff0f2" stroke-width="1.6"/></svg>
 <div class="t nav" style="left:105.7px">Search For...<span class="car"></span></div>
 <div class="t nav" style="left:149.2px">Branches<span class="car"></span></div>
 <div class="t nav" style="left:183.8px">Events/News</div>
 <div class="t nav" style="left:223.7px">Research<span class="car"></span></div>
 <div class="t nav" style="left:258.2px">About Us<span class="car"></span></div>
 <div class="t nav" style="left:294.2px">My Account</div>
 <!-- alert -->
 <div class="a" style="left:15.2px;top:57px;width:301px;height:19px;background:#dddbe6;border-radius:3.5px"></div>
 <div class="t" style="left:20.2px;top:64.7px;font-size:5.1px;color:#363640">A simple primary alert with an example link. Give it a click if you like.</div>
 <!-- carousel -->
 <svg class="a" style="left:15.2px;top:81px" width="197.4" height="110"><use href="#mtn"/></svg>
 <div class="a" style="left:44.8px;top:149.6px;width:138.4px;height:36.4px;background:rgba(40,40,100,.6)"></div>
 <div class="t" style="left:15.2px;width:197.4px;text-align:center;top:156.5px;font-size:6.1px;font-weight:bold;color:#fff;-webkit-text-stroke:.15px #fff">Third slide label</div>
 <div class="t" style="left:15.2px;width:197.4px;text-align:center;top:165.3px;font-size:4.6px;font-weight:bold;color:#fff;line-height:8px;white-space:normal;padding:0 30px">Praesent commodo cursus magna, vel scelerisque nisl consectetur.</div>
 <div class="a" style="left:97.6px;top:182.7px;width:9px;height:.9px;background:#d8d8e8"></div>
 <div class="a" style="left:109.3px;top:182.7px;width:9px;height:.9px;background:#d8d8e8"></div>
 <div class="a" style="left:120.6px;top:182.4px;width:10px;height:1.4px;background:#fff"></div>
 <div class="a chv" style="left:29.5px;top:134.5px;transform:rotate(-135deg)"></div>
 <div class="a chv" style="left:195px;top:134.5px;transform:rotate(45deg)"></div>
 <!-- calendar card -->
 <div class="a card" style="left:223px;top:81.3px;width:93.5px;height:122.7px"></div>
 <div class="t" style="left:228.3px;top:88px;font-size:5.5px;font-weight:bold;color:#3a3566">Calender</div>
 <div class="a gcal" style="left:227.5px;top:99.5px;width:83.8px;height:97.1px">
   <div class="t" style="left:.6px;top:.6px;font-size:5.2px;color:#222">Community Events</div>
   <div class="a" style="left:0;top:14.9px;width:100%;height:100px;background:#e3e8f7"></div>
   <div class="a gbtn" style="left:.6px;width:9px;background:#f1f1f1;border:.5px solid #999"></div>
   <div class="t" style="left:2.2px;top:9px;font-size:3.6px;color:#444">Tdy</div>
   <div class="a gbtn" style="left:11.6px;width:9.5px;background:#4d7ff0"></div>
   <div class="a gbtn" style="left:22.1px;width:9.5px;background:#4d7ff0"></div>
   <div class="a" style="left:14.5px;top:9.5px;width:3.5px;height:2.5px;border:.6px solid #fff"></div>
   <div class="a" style="left:25px;top:9.5px;width:3.5px;height:2.5px;border:.6px solid #fff"></div>
   <div class="t gdt" style="left:33.1px;top:9px">12/19 (Monday)</div>
   <div class="a" style="left:70.5px;top:10px;border-left:1.2px solid transparent;border-right:1.2px solid transparent;border-top:1.5px solid #555"></div>
   <div class="a" style="left:78px;top:8.3px;width:4.8px;height:4.8px;border-radius:50%;border:.8px solid #5c6fd8"></div>
   <div class="t gd" style="top:19.5px;left:7.1px">12/20 (Tuesday)</div>
   <div class="a gr" style="top:25.9px;left:2.5px;width:77.8px"></div><div class="t gt" style="top:27.3px;left:7.1px">15:30</div><div class="t ge" style="top:27.3px;left:30.5px">Green River Library - Sto</div>
   <div class="a gr" style="top:33.4px;left:2.5px;width:77.8px"></div><div class="t gt" style="top:35.2px;left:7.1px">16:00</div><div class="t ge" style="top:35.2px;left:30.5px">Emery Library - Story Hu</div>
   <div class="t gd" style="top:42.7px;left:7.1px">12/21 (Wednesday)</div>
   <div class="a gr" style="top:49.7px;left:2.5px;width:77.8px"></div><div class="t gt" style="top:50.9px;left:7.1px">10:30</div><div class="t ge" style="top:50.9px;left:30.5px">Castle Dale Library - Pre</div>
   <div class="t gd" style="top:58.8px;left:7.1px">12/22 (Thursday)</div>
   <div class="a gr" style="top:65.4px;left:2.5px;width:77.8px"></div><div class="t gt" style="top:66.9px;left:7.1px">16:00</div><div class="t ge" style="top:66.9px;left:30.5px">Emery Library - Kids Clul</div>
   <div class="t gd" style="top:74.2px;left:7.1px;color:#999">12/23 (Friday)</div>
   <div class="a" style="left:0;top:75.4px;width:100%;height:22px;background:#e3e8f7"></div>
   <div class="t gft" style="left:2.1px;top:79.6px;width:46px">Time zone shown: America Mountain Time - Denver, CO</div>
   <div class="a" style="left:48.9px;top:76.2px;width:30.4px;height:6.7px;background:#fff"></div>
   <div class="a" style="left:74.1px;top:77.1px;width:5px;height:5px;background:#4d7ff0"></div><div class="a" style="left:76.2px;top:77.9px;width:.9px;height:3.4px;background:#fff"></div><div class="a" style="left:74.9px;top:79.2px;width:3.4px;height:.9px;background:#fff"></div>
   <div class="t" style="left:49.1px;top:82.6px;font-size:4.2px;letter-spacing:-.1px"><span style="color:#4a86e8">G</span><span style="color:#e0503c">o</span><span style="color:#f0b030">o</span><span style="color:#4a86e8">g</span><span style="color:#3aa050">l</span><span style="color:#e0503c">e</span></div>
   <div class="t" style="left:66.5px;top:82.6px;font-size:4.2px;color:#666">Calen</div>
   <div class="t" style="left:72px;top:89.8px;font-size:4.2px;color:#666">dar</div>
 </div>
 <!-- sidebar card -->
 <div class="a card" style="left:15.2px;top:220.6px;width:67.4px;height:150.2px"></div>
 <div class="t" style="left:20.2px;top:226.6px;font-size:5.4px;font-weight:bold;color:#2e2a60">Castle Dale Branch</div>
 <div class="t sc h" style="top:240.4px">Contact Information</div>
 <div class="a" style="left:20.5px;top:247px;width:57px;height:.8px;background:#aac0dc"></div>
 <div class="t sc s" style="top:253.3px">133 North 100 East</div>
 <div class="t sc s" style="top:260.2px">PO Box 515</div>
 <div class="t sc s" style="top:267.1px">Castle Dale, UT 84513</div>
 <div class="t sc h" style="top:279.5px">WorkingHours</div>
 <div class="a" style="left:20.5px;top:286px;width:57px;height:.8px;background:#aac0dc"></div>
 <div class="t sc d" style="top:292.2px">Monday - Wednesday</div>
 <div class="t sc s" style="top:300.4px">10:00 am - 6:00 pm</div>
 <div class="t sc d" style="top:310.5px">Thursday</div>
 <div class="t sc s" style="top:318.6px">9:30 am - 6:30 pm</div>
 <div class="t sc d" style="top:328px">Friday</div>
 <div class="t sc s" style="top:336.2px">9:30 am - 5:00 pm</div>
 <div class="t sc d" style="top:346.2px">Saturday, Sunday</div>
 <div class="t sc s" style="top:355.2px">CLOSED</div>
 <!-- social card -->
 <div class="a card" style="left:15.2px;top:378.3px;width:67.4px;height:36.4px"></div>
 <div class="t" style="left:20.2px;top:385.8px;font-size:5.5px;font-weight:bold;color:#2e2a60">Social Media</div>
 <div class="a soc" style="left:20.4px;top:397.4px"><span style="position:absolute;left:3.6px;top:1px;font:bold 9px 'Liberation Sans';color:#fff">f</span></div>
 <div class="a soc" style="left:36.7px;top:397.4px"><div class="a" style="left:2.8px;top:2.8px;width:7px;height:7px;border:1.1px solid #fff;border-radius:2px"></div><div class="a" style="left:4.8px;top:4.8px;width:3px;height:3px;border:.9px solid #fff;border-radius:50%"></div></div>
 <div class="a acard" style="left:93.0px;top:221.0px;width:74.1px;height:107.5px"></div>
 <svg class="a" style="left:94.2px;top:222.0px" width="71.89999999999999" height="40"><use href="#beachS"/></svg>
 <div class="t at" style="left:99.2px;top:266.8px">Article Title</div>
 <div class="t ab" style="left:99.2px;top:276.4px">This is a wider card with<br>supporting text below as a<br>natural lead-in to<br>additional content. This<br>content is a little bit longer.</div>
 <div class="t rm" style="left:99.2px;top:317.5px">Read More</div>
 <div class="a acard" style="left:168.0px;top:221.0px;width:73.6px;height:107.5px"></div>
 <svg class="a" style="left:169.2px;top:222.0px" width="71.39999999999999" height="40"><use href="#beachS"/></svg>
 <div class="t at" style="left:174.2px;top:266.8px">Article Title</div>
 <div class="t ab" style="left:174.2px;top:276.4px">This is a wider card with<br>supporting text below as a<br>natural lead-in to<br>additional content. This<br>content is a little bit longer.</div>
 <div class="t rm" style="left:174.2px;top:317.5px">Read More</div>
 <div class="a acard" style="left:242.4px;top:221.0px;width:74.1px;height:107.5px"></div>
 <svg class="a" style="left:243.6px;top:222.0px" width="71.89999999999999" height="40"><use href="#beachS"/></svg>
 <div class="t at" style="left:248.6px;top:266.8px">Article Title</div>
 <div class="t ab" style="left:248.6px;top:276.4px">This is a wider card with<br>supporting text below as a<br>natural lead-in to<br>additional content. This<br>content is a little bit longer.</div>
 <div class="t rm" style="left:248.6px;top:317.5px">Read More</div>
 <div class="a acard" style="left:93.0px;top:331.9px;width:74.1px;height:107.5px"></div>
 <svg class="a" style="left:94.2px;top:332.9px" width="71.89999999999999" height="40"><use href="#beachS"/></svg>
 <div class="t at" style="left:99.2px;top:377.7px">Article Title</div>
 <div class="t ab" style="left:99.2px;top:387.29999999999995px">This is a wider card with<br>supporting text below as a<br>natural lead-in to<br>additional content. This<br>content is a little bit longer.</div>
 <div class="t rm" style="left:99.2px;top:428.4px">Read More</div>
 <div class="a acard" style="left:168.0px;top:331.9px;width:73.6px;height:107.5px"></div>
 <svg class="a" style="left:169.2px;top:332.9px" width="71.39999999999999" height="40"><use href="#beachS"/></svg>
 <div class="t at" style="left:174.2px;top:377.7px">Article Title</div>
 <div class="t ab" style="left:174.2px;top:387.29999999999995px">This is a wider card with<br>supporting text below as a<br>natural lead-in to<br>additional content. This<br>content is a little bit longer.</div>
 <div class="t rm" style="left:174.2px;top:428.4px">Read More</div>
 <div class="a acard" style="left:242.4px;top:331.9px;width:74.1px;height:107.5px"></div>
 <svg class="a" style="left:243.6px;top:332.9px" width="71.89999999999999" height="40"><use href="#beachS"/></svg>
 <div class="t at" style="left:248.6px;top:377.7px">Article Title</div>
 <div class="t ab" style="left:248.6px;top:387.29999999999995px">This is a wider card with<br>supporting text below as a<br>natural lead-in to<br>additional content. This<br>content is a little bit longer.</div>
 <div class="t rm" style="left:248.6px;top:428.4px">Read More</div>
</div>

<!-- canvas headers -->
<svg class="ico" style="left:167px;top:51.5px" width="10" height="8" viewBox="0 0 10 8"><rect x="1" y=".6" width="8" height="5.4" fill="none" stroke="#ccc" stroke-width=".9"/><path d="M0 7.2h10" stroke="#ccc" stroke-width=".9"/></svg>
<div class="t" style="left:179px;top:53px;font-size:6px;font-weight:bold;color:#eee">LG</div>
<div class="a" style="left:190.3px;top:52.6px;width:3.6px;height:3.6px;border-right:1.1px solid #eee;border-bottom:1.1px solid #eee;transform:rotate(45deg)"></div>
<div class="t" style="left:200.6px;top:52.8px;font-size:6.3px;color:#b4b4b4">1024 px</div>
<div class="a" style="left:252.8px;top:46px;width:.8px;height:16px;background:#3c3c3c"></div>
<div class="t" style="left:258.4px;top:53px;font-size:6.3px;color:#bcbcbc">Grid</div>
<div class="t" style="left:276.5px;top:53px;font-size:6.3px;color:#bcbcbc">Cols</div>
<svg class="ico" style="left:482.5px;top:51.5px" width="18" height="8" viewBox="0 0 18 8"><path d="M1 7.5l1.5-2.5 4.5-4.5 1 1-4.5 4.5z" fill="#999"/><path d="M13 2l3.8 3.8M16.8 2L13 5.8" stroke="#aaa" stroke-width=".8"/></svg>
<div class="a" style="left:502px;top:46px;width:.8px;height:16px;background:#3c3c3c"></div>
<svg class="ico" style="left:509px;top:50.6px" width="7" height="10" viewBox="0 0 7 10"><rect x=".8" y=".6" width="5" height="8.6" rx=".9" fill="none" stroke="#fff" stroke-width="1.1"/></svg>
<div class="t" style="left:518.6px;top:53px;font-size:6px;font-weight:bold;color:#eee">XS</div>
<div class="a" style="left:530.5px;top:52.6px;width:3.6px;height:3.6px;border-right:1.1px solid #eee;border-bottom:1.1px solid #eee;transform:rotate(45deg)"></div>
<div class="t" style="left:541.4px;top:52.8px;font-size:6.4px;color:#b4b4b4">480 px</div>
<div class="a" style="left:593px;top:46px;width:.8px;height:16px;background:#3c3c3c"></div>
<div class="t" style="left:598.6px;top:53px;font-size:6.3px;color:#bcbcbc">Grid</div>
<div class="t" style="left:617px;top:53px;font-size:6.3px;color:#bcbcbc">Cols</div>
<svg class="ico" style="left:645.5px;top:51px" width="19" height="9" viewBox="0 0 19 9"><path d="M.8 8.4l1.8-3 5.2-5 1.3 1.3-5 5.2z" fill="#eee"/><path d="M13.2 2.2l4.2 4.2M17.4 2.2l-4.2 4.2" stroke="#bbb" stroke-width=".8"/></svg>

<!-- XS FRAME -->
<div class="a" style="left:506.2px;top:62px;width:159px;height:436.6px;background:#1e1e1e"></div>
<div class="a" id="xs" style="left:507.7px;top:62px;width:156px;height:435px;background:#fff;overflow:hidden">
 <div class="a" style="left:0;top:0;width:100%;height:47.75px;background:#463d68"></div>
 <div class="a" style="left:0;top:47.75px;width:100%;height:1.35px;background:#3e1450"></div>
 <div class="a" style="left:0;top:49.1px;width:100%;height:2.1px;background:#5fa2c6"></div>
 <div class="a" style="left:0;top:51.2px;width:100%;height:7.8px;background:#5a86b0"></div>
 <div class="a" style="left:0;top:59px;width:100%;height:1.5px;background:#3572a8"></div>
 <div class="t" style="left:5px;top:55.1px;font-size:4.85px;font-weight:bold;color:#fff;word-spacing:1.2px;-webkit-text-stroke:.15px #fff">Home / Branches / Branch Name</div>
 <svg class="a" style="left:4.4px;top:11.2px" width="26.4" height="26.4"><use href="#logo"/></svg>
 <div class="t" style="left:31px;top:16.9px;font-size:8.1px;color:#eef6f8;transform:scaleY(1.12);transform-origin:0 0;-webkit-text-stroke:.15px #eef6f8">Emery County</div>
 <div class="t" style="left:31px;top:25.6px;font-size:9.5px;font-weight:bold;color:#dff0f2;transform:scaleY(1.02);transform-origin:0 0;letter-spacing:-.1px;-webkit-text-stroke:.35px #dff0f2">LIBRARIES</div>
 <svg class="a" style="left:82.8px;top:25.5px" width="12" height="9.5" viewBox="0 0 12 9.5"><path d="M.9 .4v8.8M3.3 .4v8.8M5.7 .4v8.8M7.6 .4l3.2 8.8" stroke="#dff0f2" stroke-width="1.6"/></svg>
 <div class="a" style="left:133.3px;top:18px;width:17px;height:14px;border:.6px solid #52487a;border-radius:1.5px"></div>
 <div class="a" style="left:137.8px;top:21.8px;width:8px;height:.8px;background:#a8a2c4;box-shadow:0 2.6px 0 #a8a2c4,0 5.2px 0 #a8a2c4"></div>
 <!-- alert -->
 <div class="a" style="left:5.3px;top:67.5px;width:145.4px;height:26px;background:#dddbe6;border-radius:3.5px"></div>
 <div class="t" style="left:10.5px;top:73px;font-size:5.1px;color:#3a3a48;line-height:8px">A simple primary alert with an example link. Give it a click if<br>you like.</div>
 <!-- carousel -->
 <svg class="a" style="left:5.3px;top:99.4px" width="145.2" height="81.2"><use href="#mtn"/></svg>
 <div class="a" style="left:61.3px;top:171.6px;width:10px;height:.9px;background:#d8d8e8"></div>
 <div class="a" style="left:73px;top:171.6px;width:10px;height:.9px;background:#d8d8e8"></div>
 <div class="a" style="left:84.9px;top:171.3px;width:10px;height:1.5px;background:#fff"></div>
 <div class="a chv" style="left:14.5px;top:137.5px;transform:rotate(-135deg)"></div>
 <div class="a chv" style="left:136.5px;top:137.5px;transform:rotate(45deg)"></div>
 <!-- calendar card -->
 <div class="a card" style="left:5.3px;top:181px;width:145.2px;height:123px"></div>
 <div class="t" style="left:10.5px;top:188px;font-size:5.5px;font-weight:bold;color:#3a3566">Calender</div>
 <div class="a gcal" style="left:10.6px;top:199.6px;width:135.8px;height:97.6px">
   <div class="t" style="left:.1px;top:.8px;font-size:5.1px;color:#222">Community Events</div>
   <div class="a" style="left:0;top:16.1px;width:100%;height:100px;background:#e3e8f7"></div>
   <div class="a gbtn" style="left:.1px;width:8.5px;background:#f1f1f1;border:.5px solid #999"></div>
   <div class="t" style="left:1.5px;top:9px;font-size:3.6px;color:#444">Tdy</div>
   <div class="a gbtn" style="left:11.1px;width:8.7px;background:#4d7ff0"></div>
   <div class="a gbtn" style="left:21.1px;width:9px;background:#4d7ff0"></div>
   <div class="a" style="left:13.7px;top:9.5px;width:3.5px;height:2.5px;border:.6px solid #fff"></div>
   <div class="a" style="left:23.8px;top:9.5px;width:3.5px;height:2.5px;border:.6px solid #fff"></div>
   <div class="t gdt" style="left:32.1px;top:9px">12/19 (Monday)</div>
   <div class="a" style="left:72px;top:10px;border-left:1.2px solid transparent;border-right:1.2px solid transparent;border-top:1.5px solid #555"></div>
   <div class="a" style="left:77.3px;top:8.3px;width:4.8px;height:4.8px;border-radius:50%;border:.8px solid #5c6fd8"></div>
   <div class="t" style="left:83px;top:9px;font-size:4.2px;color:#444">Print</div>
   <div class="a" style="left:92px;top:6.8px;width:7.5px;height:8.5px;background:#e3e8f7"></div>
   <div class="t" style="left:93.8px;top:9px;font-size:4.2px;color:#4a6ad0">W</div>
   <div class="t" style="left:102px;top:9px;font-size:4.2px;color:#4a6ad0">M</div>
   <div class="a" style="left:110.2px;top:6.8px;width:24.5px;height:8.5px;background:#e3e8f7"></div>
   <div class="t" style="left:111.5px;top:9px;font-size:4.2px;color:#444;letter-spacing:.2px">Agenda</div>
   <div class="t gd" style="top:19px;left:6.1px">12/20 (Tuesday)</div>
   <div class="a gr" style="top:25.7px;left:2.2px;width:129.4px"></div><div class="t gt" style="top:27.2px;left:6.1px">15:30</div><div class="t ge" style="top:27.2px;left:29.3px">Green River Library - Story Time</div>
   <div class="a gr" style="top:33.6px;left:2.2px;width:129.4px"></div><div class="t gt" style="top:35px;left:6.1px">16:00</div><div class="t ge" style="top:35px;left:29.3px">Emery Library - Story Hunters</div>
   <div class="t gd" style="top:43.3px;left:6.1px">12/21 (Wednesday)</div>
   <div class="a gr" style="top:49.5px;left:2.2px;width:129.4px"></div><div class="t gt" style="top:50.9px;left:6.1px">10:30</div><div class="t ge" style="top:50.9px;left:29.3px">Castle Dale Library - Preschool Story Time</div>
   <div class="t gd" style="top:58.8px;left:6.1px">12/22 (Thursday)</div>
   <div class="a gr" style="top:65.2px;left:2.2px;width:129.4px"></div><div class="t gt" style="top:66.6px;left:6.1px">16:00</div><div class="t ge" style="top:66.6px;left:29.3px">Emery Library - Kids Club</div>
   <div class="t gd" style="top:74.5px;left:6.1px">12/23 (Friday)</div>
   <div class="t gft" style="left:2.8px;top:84px;width:90px">Time zone: America Mountain Time - Denver, Colorado US</div>
   <div class="a" style="left:90.7px;top:82.4px;width:39.3px;height:6.8px;background:#fff"></div>
   <div class="a" style="left:125.9px;top:83.2px;width:4.6px;height:5.4px;background:#4d7ff0"></div><div class="a" style="left:127.8px;top:84.2px;width:.9px;height:3.4px;background:#fff"></div><div class="a" style="left:126.5px;top:85.5px;width:3.4px;height:.9px;background:#fff"></div>
   <div class="t" style="left:95.3px;top:89px;font-size:4.2px;letter-spacing:-.1px"><span style="color:#4a86e8">G</span><span style="color:#e0503c">o</span><span style="color:#f0b030">o</span><span style="color:#4a86e8">g</span><span style="color:#3aa050">l</span><span style="color:#e0503c">e</span></div>
   <div class="t" style="left:109.7px;top:89px;font-size:4.2px;color:#666">Calendar</div>
 </div>
 <!-- article card -->
 <div class="a acard" style="left:5.3px;top:321px;width:145.2px;height:120px"></div>
 <svg class="a" style="left:6.3px;top:322px" width="142.8" height="79.5"><use href="#beach"/></svg>
 <div class="t at" style="left:11.5px;top:406.7px">Article Title</div>
 <div class="t ab" style="left:11.5px;top:416.2px">This is a wider card with supporting text below as a<br>natural lead-in to additional content. This content is a little<br>bit longer.</div>
</div>

<div class="a" id="status"></div>
<div class="t" style="left:167.5px;top:508.1px;font-size:5.6px;color:#d0d0d0">Click to select element. Use</div>
<div class="a kb" style="left:237.2px;width:14.3px"></div><div class="t" style="left:239.8px;top:508.3px;font-size:5px;color:#d0d0d0">CMD</div>
<div class="t" style="left:253.3px;top:508.1px;font-size:5.6px;color:#d0d0d0">or</div>
<div class="a kb" style="left:259.7px;width:21px"></div><div class="t" style="left:263px;top:508.3px;font-size:5px;color:#d0d0d0">SHIFT</div>
<div class="t" style="left:283.2px;top:508.1px;font-size:5.6px;color:#d0d0d0">to select multiple.</div>
<div class="a kb" style="left:327px;width:14.6px"></div><div class="t" style="left:329.8px;top:508.3px;font-size:5px;color:#d0d0d0">ESC</div>
<div class="t" style="left:344px;top:508.1px;font-size:5.6px;color:#d0d0d0">to unselect elements.</div>

<div class="a" id="rside"></div>
<div class="a" style="left:679px;top:34px;width:121px;height:12.5px;background:#2a2a2a"></div>
<div class="a" style="left:679px;top:34px;width:19.5px;height:12.5px;background:#353535"></div>
<div class="a" style="left:678px;top:34px;width:1.2px;height:483px;background:#2b2b2b"></div>
<svg class="ico" style="left:683px;top:35.5px" width="68" height="10" viewBox="0 0 68 10"><path d="M1.5 2h9M1.5 5h9M1.5 8h9" stroke="#eee" stroke-width="1.2"/><path d="M4 1v2M7.5 4v2M4 7v2" stroke="#eee" stroke-width="1.6"/><path d="M20 9l1-2.5 5.5-5.5 1.5 1.5-5.5 5.5z" fill="none" stroke="#eee" stroke-width="1.1"/><ellipse cx="43" cy="5" rx="5" ry="3.5" fill="none" stroke="#eee" stroke-width="1.2"/><circle cx="43" cy="5.5" r="1.5" fill="#eee"/><path d="M58 1.5h4l3 3.5-3 3.5h-4z" fill="none" stroke="#eee" stroke-width="1.1"/><path d="M59 5h3M61 3.5l1.5 1.5L61 6.5" fill="none" stroke="#eee" stroke-width=".8"/></svg>
<svg class="ico" style="left:778px;top:36px" width="21" height="9" viewBox="0 0 21 9"><path d="M1 4.5Q4.5 1 8 4.5 4.5 8 1 4.5z" fill="none" stroke="#666" stroke-width=".9"/><circle cx="4.5" cy="4.5" r="1.1" fill="#666"/><rect x="12" y="3" width="5" height="5.5" fill="none" stroke="#666" stroke-width=".9"/><path d="M14 3V1h5v5.5h-2" fill="none" stroke="#666" stroke-width=".9"/></svg>
<div class="a" style="left:683.6px;top:56.5px;width:111.7px;height:30px;background:#313131"></div>
<div class="t" style="left:691px;top:63.6px;font-size:5.9px;font-weight:bold;color:#4ea3d8;line-height:8.6px">Select one or more elements on<br>the page to edit their properties.</div>

</body></html>
